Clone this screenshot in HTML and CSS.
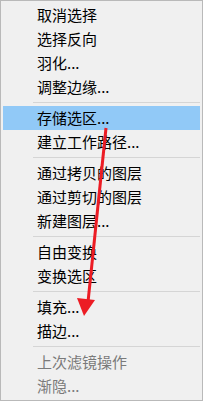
FILE: index.html
```html
<!DOCTYPE html>
<html lang="zh-CN">

<head>
    <meta charset="UTF-8" />
    <meta name="viewport" content="width=device-width, initial-scale=1.0" />
    <title>菜单</title>
    <link rel="stylesheet" href="styles.css">
</head>

<body>
    <div class="menu">
        <ul class="menu-list">
            <li class="menu-item">取消选择</li>
            <li class="menu-item">选择反向</li>
            <li class="menu-item">羽化...</li>
            <li class="menu-item">调整边缘...</li>
            <li class="menu-sep"></li>
            <li class="menu-item current">存储选区...</li>
            <li class="menu-item">建立工作路径...</li>
            <li class="menu-sep"></li>
            <li class="menu-item">通过拷贝的图层</li>
            <li class="menu-item">通过剪切的图层</li>
            <li class="menu-item">新建图层...</li>
            <li class="menu-sep"></li>
            <li class="menu-item">自由变换</li>
            <li class="menu-item">变换选区</li>
            <li class="menu-sep"></li>
            <li class="menu-item">填充...</li>
            <li class="menu-item">描边...</li>
            <li class="menu-sep"></li>
            <li class="menu-item disabled">上次滤镜操作</li>
            <li class="menu-item disabled">渐隐...</li>
        </ul>
        <!-- 红色箭头标注 -->
        <svg class="arrow" width="203" height="401" viewBox="0 0 203 401">
            <line x1="106" y1="128" x2="88" y2="302" stroke="#ec1c24" stroke-width="3" />
            <polygon points="77,298 95,300 84,316" fill="#ec1c24" />
        </svg>
    </div>
</body>

</html>
```

FILE: styles.css
```css
* {
    margin: 0;
    padding: 0;
}

body {
    width: 203px;
    height: 401px;
    overflow: hidden;
    font-family: "Noto Sans CJK SC", "Noto Sans", sans-serif;
}

.menu {
    position: relative;
    width: 203px;
    height: 401px;
    box-sizing: border-box;
    border: 1px solid #b9b9b9;
    background-color: #f0f0f0;
    padding: 2px;
}

.menu-list {
    list-style-type: none;
}

.menu-item {
    height: 24px;
    line-height: 24px;
    padding-left: 34px;
    font-size: 15px;
    color: #000;
    white-space: nowrap;
}

.menu-item.current {
    background-color: #91c9f7;
}

.menu-item.disabled {
    color: #7a7a7a;
}

.menu-sep {
    height: 7px;
    display: flex;
    align-items: center;
    padding-left: 30px;
}

.menu-sep::after {
    content: "";
    display: block;
    width: 100%;
    height: 1px;
    background-color: #d5d5d5;
}

.arrow {
    position: absolute;
    left: -1px;
    top: -1px;
}
```
